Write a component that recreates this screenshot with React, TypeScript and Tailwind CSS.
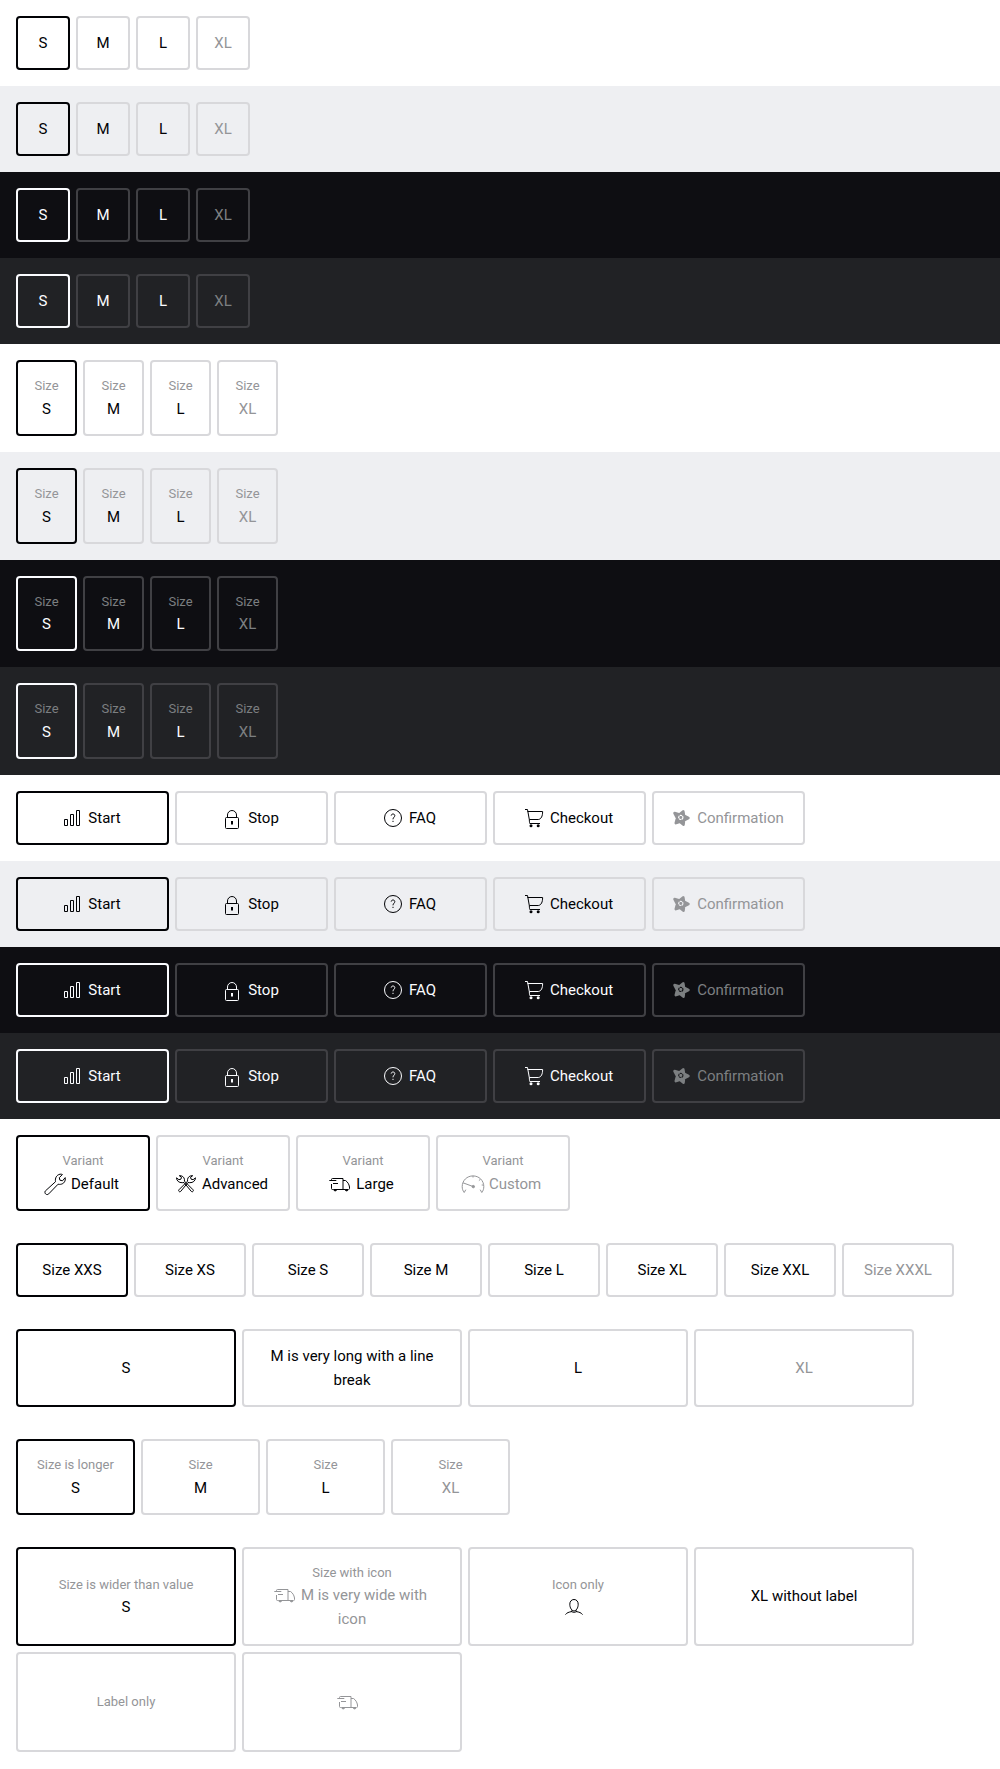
import React from "react";

type IconName = "chart" | "lock" | "question" | "cart" | "flower" | "wrench" | "wrenches" | "truck" | "gauge" | "user";
type Theme = "light" | "dark";
type Item = { value?: string; label?: string; icon?: IconName; disabled?: boolean };

function Flower() {
  const id = React.useId();
  return (
    <>
      <mask id={id} maskUnits="userSpaceOnUse" x="0" y="0" width="24" height="24">
        <rect width="24" height="24" fill="white" stroke="none" />
        <circle cx="11.8" cy="11.4" r="2.1" fill="none" stroke="black" strokeWidth="1.2" strokeDasharray="2.2 0.44" />
      </mask>
      <path
        mask={`url(#${id})`}
        fill="currentColor"
        strokeWidth="2.8"
        strokeLinejoin="round"
        d="M5.6 7.2 10.500 8.600 14.200 5.500 14.900 9.800 19.300 12 14.900 14.300 14.400 18.500 11 15.600 6.900 17 8.200 12Z"
      />
    </>
  );
}

const drawings: Record<IconName, React.ReactNode> = {
  chart: <path d="M4.5 13.5h3v6h-3zM10.5 8.5h3v11h-3zM16.5 4.5h3v15h-3z" />,
  lock: (
    <>
      <rect x="5.5" y="11.5" width="13" height="11" rx="1" />
      <path d="M7.5 11.5V9a4.5 4.5 0 0 1 9 0v2.5" />
      <path d="M12 15v3.5" strokeWidth="2" />
    </>
  ),
  question: (
    <>
      <circle cx="12" cy="12" r="8.5" />
      <path d="M10.2 9.6c.1-1 .8-1.6 1.8-1.6s1.8.6 1.8 1.6c0 1.6-1.8 1.7-1.8 3.7M12 14.8V16" />
    </>
  ),
  cart: (
    <>
      <path d="M3 3.5h2.500l1.800 10c.2 2.500.2 4 .5 4H18M5.500 5.500H20.600c.1 4.500-1.400 7.700-4.300 8H7.300" />
      <circle cx="9" cy="19.700" r="1.5" fill="currentColor" stroke="none" />
      <circle cx="16.200" cy="19.700" r="1.5" fill="currentColor" stroke="none" />
    </>
  ),
  flower: <Flower />,
  wrench: (
    <path d="M2.3 19 12.500 9.700C11.900 6 13.600 2.900 17 2.200c.9-.2 1.600 0 2.400.3L16.300 5.700l.6 2.500 2.600.6L22.200 5.600c.6 3.500-1.300 6.200-4.500 6.700-.9.200-1.700.1-2.600-.1L5.700 21.900c-.8.9-2.200.9-3 .1-.9-.8-1-2.100-.4-3Z" />
  ),
  wrenches: (
    <>
      <path d="M10 10.500 8.200 10.700C5 10.900 2.500 8.700 2.500 5.800l2.400 1.900 2.100-.6.4-2L5.300 3.700c2.700-.3 5 1.300 5.200 4l-.1 1.400 8.700 8.700c1 1-.7 2.700-1.700 1.700Z" />
      <path d="m14 10.500 1.800.2c3.200.2 5.700-2 5.700-4.900l-2.400 1.900-2.100-.6-.4-2 2.100-1.400c-2.700-.3-5 1.300-5.200 4l.1 1.400-8.700 8.700c-1 1 .7 2.700 1.700 1.700Z" />
    </>
  ),
  truck: (
    <>
      <path d="M3.500 8V7.500a1 1 0 0 1 1-1h10.500v11H9.200M5.200 17.500H4.500a1 1 0 0 1-1-1V12M1.300 8.500h7M5 11.500h5M15 8.500h2.500c2.200 1.500 3.500 3.600 4 6.500v1.500a1 1 0 0 1-1 1M16.500 17.500H15M5.500 17.500h12" />
      <path d="M5.800 17.500a1.400 1.400 0 0 0 2.800 0zM17.200 17.500a1.400 1.400 0 0 0 2.800 0z" fill="currentColor" />
    </>
  ),
  gauge: (
    <>
      <path d="M4.800 17.700 3.200 20.500C1.800 18.800 1.200 16.800 1.200 14.600 1.200 8.500 6 3.900 12 3.900s10.800 4.600 10.800 10.700c0 2.200-.6 4.200-2 5.900l-1.600-2.800M2 10.800l10 3.700M19.300 7.300l-1.400 1.300M22.500 13h-1.800M12 3.900v1.600" />
      <circle cx="12.300" cy="14.600" r="1.200" fill="currentColor" />
    </>
  ),
  user: (
    <path d="M12 4.500c2.500 0 4.200 1.900 4.200 4.700 0 3.600-1.900 6.700-4.200 6.700s-4.200-3.100-4.200-6.700c0-2.800 1.700-4.700 4.200-4.700ZM3.500 19.600c1.200-1.900 3.300-2.500 6.500-3.100 0-.7 0-1.200-.3-1.900M20.500 19.600c-1.200-1.900-3.300-2.500-6.500-3.100 0-.7 0-1.200.3-1.900M9.500 16.600c1.500.9 3.500.9 5 0" />
  ),
};

function Icon({ name }: { name: IconName }) {
  return (
    <svg viewBox="0 0 24 24" fill="none" stroke="currentColor" strokeWidth="1" aria-hidden="true" className="-ml-1 mr-1 inline-block size-6 align-top">
      {drawings[name]}
    </svg>
  );
}

const palette = {
  light: { text: "text-[#010205]", muted: "text-[#949598]", selected: "border-[#010205]", border: "border-[#d8d8db]" },
  dark: { text: "text-[#fbfcff]", muted: "text-[#7c7f81]", selected: "border-[#fbfcff]", border: "border-[#404044]" },
};

function SegmentedControl({ items, columns, theme = "light", surface = "bg-white" }: { items: Item[]; columns: string; theme?: Theme; surface?: string }) {
  const [selected, setSelected] = React.useState(0);
  const c = palette[theme];
  return (
    <div className={`p-4 ${surface}`}>
      <div role="group" className={`grid auto-rows-fr gap-1.5 ${columns}`}>
        {items.map((item, i) => (
          <button
            key={i}
            type="button"
            disabled={item.disabled}
            aria-pressed={i === selected}
            aria-label={item.value || item.label ? undefined : item.icon}
            onClick={() => setSelected(i)}
            className={`rounded-sm border-2 px-3 py-[13px] text-center text-[15px] leading-6 ${i === selected ? c.selected : c.border} ${item.disabled ? c.muted : c.text}`}
          >
            {item.label && <span className={`block text-[13px] leading-[1.675] ${c.muted}`}>{item.label}</span>}
            {(item.value || item.icon) && (
              <span className={item.icon ? "block px-1.5" : "block"}>
                {item.icon && <Icon name={item.icon} />}
                {item.value}
              </span>
            )}
          </button>
        ))}
      </div>
    </div>
  );
}

const themes: { theme: Theme; surface: string }[] = [
  { theme: "light", surface: "bg-white" },
  { theme: "light", surface: "bg-[#eeeff2]" },
  { theme: "dark", surface: "bg-[#0e0e12]" },
  { theme: "dark", surface: "bg-[#212225]" },
];

const sizes: Item[] = [{ value: "S" }, { value: "M" }, { value: "L" }, { value: "XL", disabled: true }];
const labelledSizes: Item[] = sizes.map((s) => ({ ...s, label: "Size" }));
const steps: Item[] = [
  { value: "Start", icon: "chart" },
  { value: "Stop", icon: "lock" },
  { value: "FAQ", icon: "question" },
  { value: "Checkout", icon: "cart" },
  { value: "Confirmation", icon: "flower", disabled: true },
];
const variants: Item[] = [
  { label: "Variant", value: "Default", icon: "wrench" },
  { label: "Variant", value: "Advanced", icon: "wrenches" },
  { label: "Variant", value: "Large", icon: "truck" },
  { label: "Variant", value: "Custom", icon: "gauge", disabled: true },
];
const namedSizes: Item[] = ["XXS", "XS", "S", "M", "L", "XL", "XXL", "XXXL"].map((s) => ({ value: `Size ${s}`, disabled: s === "XXXL" }));
const longValue: Item[] = sizes.map((s) => (s.value === "M" ? { value: "M is very long with a line break" } : s));
const longLabel: Item[] = labelledSizes.map((s, i) => (i === 0 ? { ...s, label: "Size is longer" } : s));
const mixed: Item[] = [
  { label: "Size is wider than value", value: "S" },
  { label: "Size with icon", value: "M is very wide with icon", icon: "truck", disabled: true },
  { label: "Icon only", icon: "user" },
  { value: "XL without label" },
  { label: "Label only", disabled: true },
  { icon: "truck", disabled: true },
];

export default function App() {
  return (
    <main className="bg-white font-['Roboto',sans-serif]">
      {themes.map((t) => (
        <SegmentedControl key={t.surface} {...t} items={sizes} columns="grid-cols-[repeat(auto-fill,54px)]" />
      ))}
      {themes.map((t) => (
        <SegmentedControl key={t.surface} {...t} items={labelledSizes} columns="grid-cols-[repeat(auto-fill,61px)]" />
      ))}
      {themes.map((t) => (
        <SegmentedControl key={t.surface} {...t} items={steps} columns="grid-cols-[repeat(auto-fill,153px)]" />
      ))}
      <SegmentedControl items={variants} columns="grid-cols-[repeat(auto-fill,134px)]" />
      <SegmentedControl items={namedSizes} columns="grid-cols-[repeat(auto-fill,112px)]" />
      <SegmentedControl items={longValue} columns="grid-cols-[repeat(auto-fill,220px)]" />
      <SegmentedControl items={longLabel} columns="grid-cols-[repeat(auto-fill,119px)]" />
      <SegmentedControl items={mixed} columns="grid-cols-[repeat(auto-fill,220px)]" />
    </main>
  );
}
